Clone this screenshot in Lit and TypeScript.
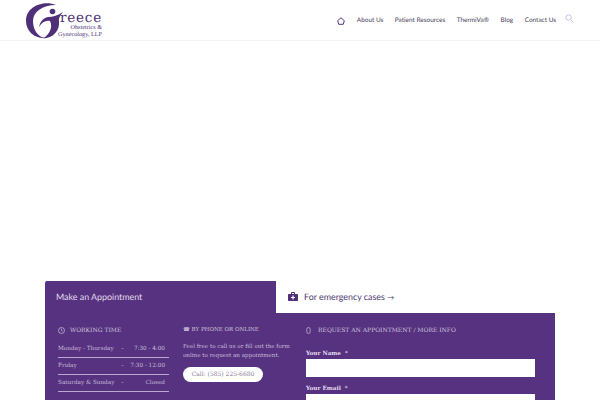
import { LitElement, html, css } from "lit";
import { customElement } from "lit/decorators.js";

@customElement("app-root")
export class AppRoot extends LitElement {
  static styles = css`
    :host { display: block; width: 600px; height: 400px; overflow: hidden; background: #fff; font-family: "DejaVu Serif", serif; color: #cfc3dc; text-rendering: geometricPrecision; font-variant-ligatures: none; }
    * { box-sizing: border-box; }
    header { height: 41px; border-bottom: 1px solid #f3f3f5; display: flex; align-items: flex-start; justify-content: space-between; padding: 0 26px 0 25px; }
    .logo { width: 80px; height: 40px; position: relative; }
    .logo svg { display: block; }
    .lt { position: absolute; left: 31px; top: 14px; color: #4e2f78; text-align: right; width: 46px; }
    .reece { font-size: 13.500px; line-height: 9.500px; letter-spacing: .8px; text-align: left; margin-left: 4px; white-space: nowrap; }
    .sub { font-family: "Liberation Serif", serif; font-size: 6.200px; line-height: 7px; white-space: nowrap; }
    nav { display: flex; align-items: center; font-family: "Lato", sans-serif; font-size: 6.450px; color: #47425a; height: 41px; }
    nav span { white-space: nowrap; }
    nav .home { margin-right: 12px; display: block; }
    .links { display: flex; gap: 11.500px; }
    .search { margin-left: 9px; margin-top: -4px; display: block; }
    .gap { height: 240px; }
    .panel { margin: 0 45px; }
    .tabs { display: flex; height: 32px; }
    .tab { width: 231px; background: #563280; border-radius: 2px 0 0 0; color: #e3dbec; font-family: "Lato", sans-serif; font-size: 8.900px; display: flex; align-items: center; padding: 0 0 2px 11px; }
    .em { display: flex; align-items: center; padding: 0 0 2px 12px; gap: 6px; color: #4e3a72; font-family: "Lato", sans-serif; font-size: 8.900px; }
    .arrow { font-size: 7px; }
    .main { background: #563280; height: 87px; display: flex; padding: 0 20px 0 13px; }
    .col1 { width: 111px; }
    .col2 { width: 123px; margin-left: 14px; }
    .col3 { flex: 1; min-width: 0; }
    h4 { margin: 0; font-weight: 400; font-size: 6px; line-height: 9px; padding-top: 13px; height: 28px; display: flex; align-items: flex-start; white-space: nowrap; color: #cfc3dc; }
    h4 svg { margin-right: 5px; flex: none; margin-top: 1px; }
    .col2 h4 { font-size: 5.500px; }
    .col3 h4 svg { margin-right: 7px; }
    .row { display: grid; grid-template-columns: 63px 1fr auto; font-size: 5.700px; height: 17px; line-height: 11px; padding: 3px 4px 0 0; border-bottom: 1px solid #b9a8d0; color: #c9bcd8; white-space: nowrap; }
    p { margin: 0; padding-top: 1.500px; font-size: 5.600px; line-height: 9px; color: #c9bcd8; white-space: nowrap; }
    .btn { display: block; margin-top: 6.500px; background: #fff; color: #8a7a99; border-radius: 8px; width: 80px; text-align: center; height: 15px; line-height: 15px; font-size: 6px; white-space: nowrap; }
    label { display: block; font-size: 5.700px; font-weight: 700; color: #e3dbec; line-height: 9px; white-space: nowrap; }
    label i { font-style: normal; font-weight: 400; margin-left: 2px; }
    .field { height: 18px; background: #fff; width: 229px; margin-bottom: 8px; }
    .f { padding-top: 9px; }
  `;

  render() {
    return html`
      <header>
        <div class="logo">
          <svg width="46" height="40" viewBox="25 0 46 40">
            <path d="M56 5C44 0 26 6 26 21 26 32 36 39 45 38 38 37 33 30 33 21 33 12 42 5 56 5Z" fill="#4e2f78"/>
            <path d="M43 38.500C53 38 60 31 59 21 58.700 19 59 17 63 12 58 15.500 53 17 48 17 43 18 40 22 39 27 42 22 46 20 50 21 53 27 50 34 43 38.500Z" fill="#4e2f78"/>
            <circle cx="52.500" cy="11.500" r="2.800" fill="#4e2f78"/>
          </svg>
          <div class="lt">
            <div class="reece">reece</div>
            <div class="sub">Obstetrics &amp;</div>
            <div class="sub">Gynecology, LLP</div>
          </div>
        </div>
        <nav>
          <svg class="home" width="8" height="8" viewBox="0 0 8 8" fill="none" stroke="#57377f" stroke-width="1">
            <path d="M.7 3.700 4 .8l3.300 2.900-1 3.600H1.700Z"/>
          </svg>
          <div class="links">
            <span>About Us</span><span>Patient Resources</span><span>ThermiVa®</span><span>Blog</span><span>Contact Us</span>
          </div>
          <svg class="search" width="9" height="9" viewBox="0 0 9 9" fill="none" stroke="#c9bfe0" stroke-width="1">
            <circle cx="3.500" cy="3.500" r="2.700"/><path d="M5.500 5.500 8.300 8.300"/>
          </svg>
        </nav>
      </header>
      <div class="gap"></div>
      <section class="panel">
        <div class="tabs">
          <div class="tab">Make an Appointment</div>
          <div class="em">
            <svg width="10" height="9" viewBox="0 0 10 9">
              <path d="M3 2V.9C3 .4 3.400 0 3.900 0h2.200C6.600 0 7 .4 7 .9V2h2c.6 0 1 .4 1 1v5c0 .6-.4 1-1 1H1C.4 9 0 8.600 0 8V3c0-.6.4-1 1-1Zm1 0h2V1H4Z" fill="#4e2f78" fill-rule="evenodd"/>
              <path d="M4.400 3.500h1.200v1.400H7v1.200H5.600v1.400H4.400V6.100H3V4.900h1.400Z" fill="#fff"/>
            </svg>
            <span>For emergency cases <span class="arrow">→</span></span>
          </div>
        </div>
        <div class="main">
          <div class="col1">
            <h4><svg width="7" height="7" viewBox="0 0 7 7" fill="none" stroke="#cfc3dc" stroke-width=".7"><circle cx="3.500" cy="3.500" r="3"/><path d="M3.500 1.700v1.900l1.200.7"/></svg>WORKING TIME</h4>
            <div>
              <div class="row"><span>Monday - Thursday</span><span>–</span><span>7:30 - 4:00</span></div>
              <div class="row"><span>Friday</span><span>–</span><span>7:30 - 12:00</span></div>
              <div class="row"><span>Saturday &amp; Sunday</span><span>–</span><span>Closed</span></div>
            </div>
          </div>
          <div class="col2">
            <h4>☎ BY PHONE OR ONLINE</h4>
            <p>Feel free to call us or fill out the form<br />online to request an appointment.</p>
            <span class="btn">Call: (585) 225-6680</span>
          </div>
          <div class="col3">
            <h4><svg width="5" height="7" viewBox="0 0 5 7" fill="none" stroke="#cfc3dc" stroke-width=".7"><rect x=".8" y=".5" width="3.400" height="6" rx="1.700"/></svg>REQUEST AN APPOINTMENT / MORE INFO</h4>
            <div class="f">
              <label>Your Name <i>*</i></label>
              <div class="field"></div>
              <label>Your Email <i>*</i></label>
              <div class="field"></div>
            </div>
          </div>
        </div>
      </section>
    `;
  }
}
